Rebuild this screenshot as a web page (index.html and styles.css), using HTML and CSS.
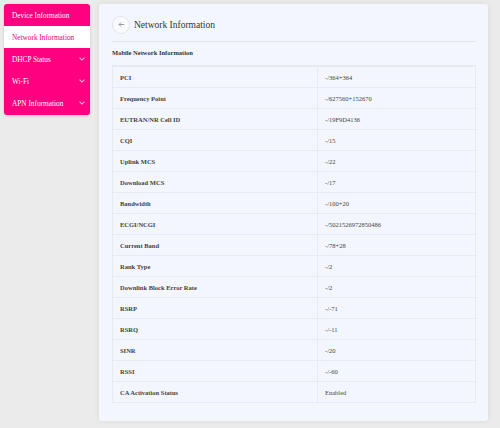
FILE: index.html
```html
<!DOCTYPE html>
<html lang="en">
<head>
  <meta charset="UTF-8" />
  <meta name="viewport" content="width=device-width, initial-scale=1.0"/>
  <title>Network Information</title>
  <link rel="stylesheet" href="styles.css">
</head>
<body>
  <nav class="sidebar">
    <a class="menu-item">Device Information</a>
    <a class="menu-item active">Network Information</a>
    <a class="menu-item">DHCP Status <span class="chev"></span></a>
    <a class="menu-item">Wi-Fi <span class="chev"></span></a>
    <a class="menu-item">APN Information <span class="chev"></span></a>
  </nav>

  <main class="card">
    <div class="card-header">
      <button class="back">
        <svg width="7" height="7" viewBox="0 0 10 10"><path d="M9 5H1.5M4.5 2L1.5 5l3 3" fill="none" stroke="#888" stroke-width="1.2"/></svg>
      </button>
      <h1>Network Information</h1>
    </div>
    <h2>Mobile Network Information</h2>
    <table class="info">
      <tr><td>PCI</td><td>-/364+364</td></tr>
      <tr><td>Frequency Point</td><td>-/627560+152670</td></tr>
      <tr><td>EUTRAN/NR Cell ID</td><td>-/19F9D4136</td></tr>
      <tr><td>CQI</td><td>-/15</td></tr>
      <tr><td>Uplink MCS</td><td>-/22</td></tr>
      <tr><td>Download MCS</td><td>-/17</td></tr>
      <tr><td>Bandwidth</td><td>-/100+20</td></tr>
      <tr><td>ECGI/NCGI</td><td>-/5021526972850486</td></tr>
      <tr><td>Current Band</td><td>-/78+28</td></tr>
      <tr><td>Rank Type</td><td>-/2</td></tr>
      <tr><td>Downlink Block Error Rate</td><td>-/2</td></tr>
      <tr><td>RSRP</td><td>-/-71</td></tr>
      <tr><td>RSRQ</td><td>-/-11</td></tr>
      <tr><td>SINR</td><td>-/20</td></tr>
      <tr><td>RSSI</td><td>-/-60</td></tr>
      <tr><td>CA Activation Status</td><td>Enabled</td></tr>
    </table>
  </main>
</body>
</html>
```

FILE: styles.css
```css
body {
  font-family: "Liberation Serif", "Times New Roman", serif;
  background-color: #ebebeb;
  margin: 0;
  padding: 4px;
  display: flex;
  align-items: flex-start;
  gap: 9px;
  color: #333;
}
.sidebar {
  width: 86px;
  background-color: #ff0080;
  border-radius: 3px;
  display: flex;
  flex-direction: column;
  padding-bottom: 1px;
  box-shadow: 0 1px 3px rgba(0,0,0,0.15);
}
.menu-item {
  height: 22px;
  display: flex;
  align-items: center;
  justify-content: space-between;
  padding: 0 6px 0 8px;
  font-size: 7.3px;
  color: #fff;
  cursor: pointer;
}
.menu-item:first-child { border-radius: 3px 3px 0 0; }
.menu-item.active {
  background-color: #fff;
  color: #e6007a;
}
.chev {
  width: 3px;
  height: 3px;
  border-right: 1px solid rgba(255,255,255,0.7);
  border-bottom: 1px solid rgba(255,255,255,0.7);
  transform: rotate(45deg);
  margin-top: -2px;
}
.card {
  width: 389px;
  height: 417px;
  box-sizing: border-box;
  background-color: #f3f7fd;
  border-radius: 3px;
  box-shadow: 0 0 6px rgba(0,0,0,0.08);
  padding: 4px 12px 0 13px;
}
.card-header {
  height: 33px;
  display: flex;
  align-items: center;
  gap: 4px;
  border-bottom: 1px solid #dfe4ea;
}
.back {
  width: 18px;
  height: 18px;
  border-radius: 50%;
  border: 1px solid #e2e6ec;
  background: #f8fafd;
  display: flex;
  align-items: center;
  justify-content: center;
  padding: 0;
}
h1 {
  font-size: 9.5px;
  font-weight: normal;
  margin: 0;
  color: #333;
}
h2 {
  font-size: 6.5px;
  font-weight: bold;
  margin: 0;
  height: 23px;
  line-height: 21px;
  color: #333;
  border-bottom: 1px solid #e6ebf1;
}
.info {
  width: 100%;
  border-collapse: collapse;
  font-size: 6.5px;
}
.info td {
  height: 20px;
  padding: 0 0 0 7px;
  border: 1px solid #e6ebf1;
}
.info td:first-child {
  width: 197px;
  font-weight: bold;
  color: #444;
}
.info td:last-child { color: #444; }
```
